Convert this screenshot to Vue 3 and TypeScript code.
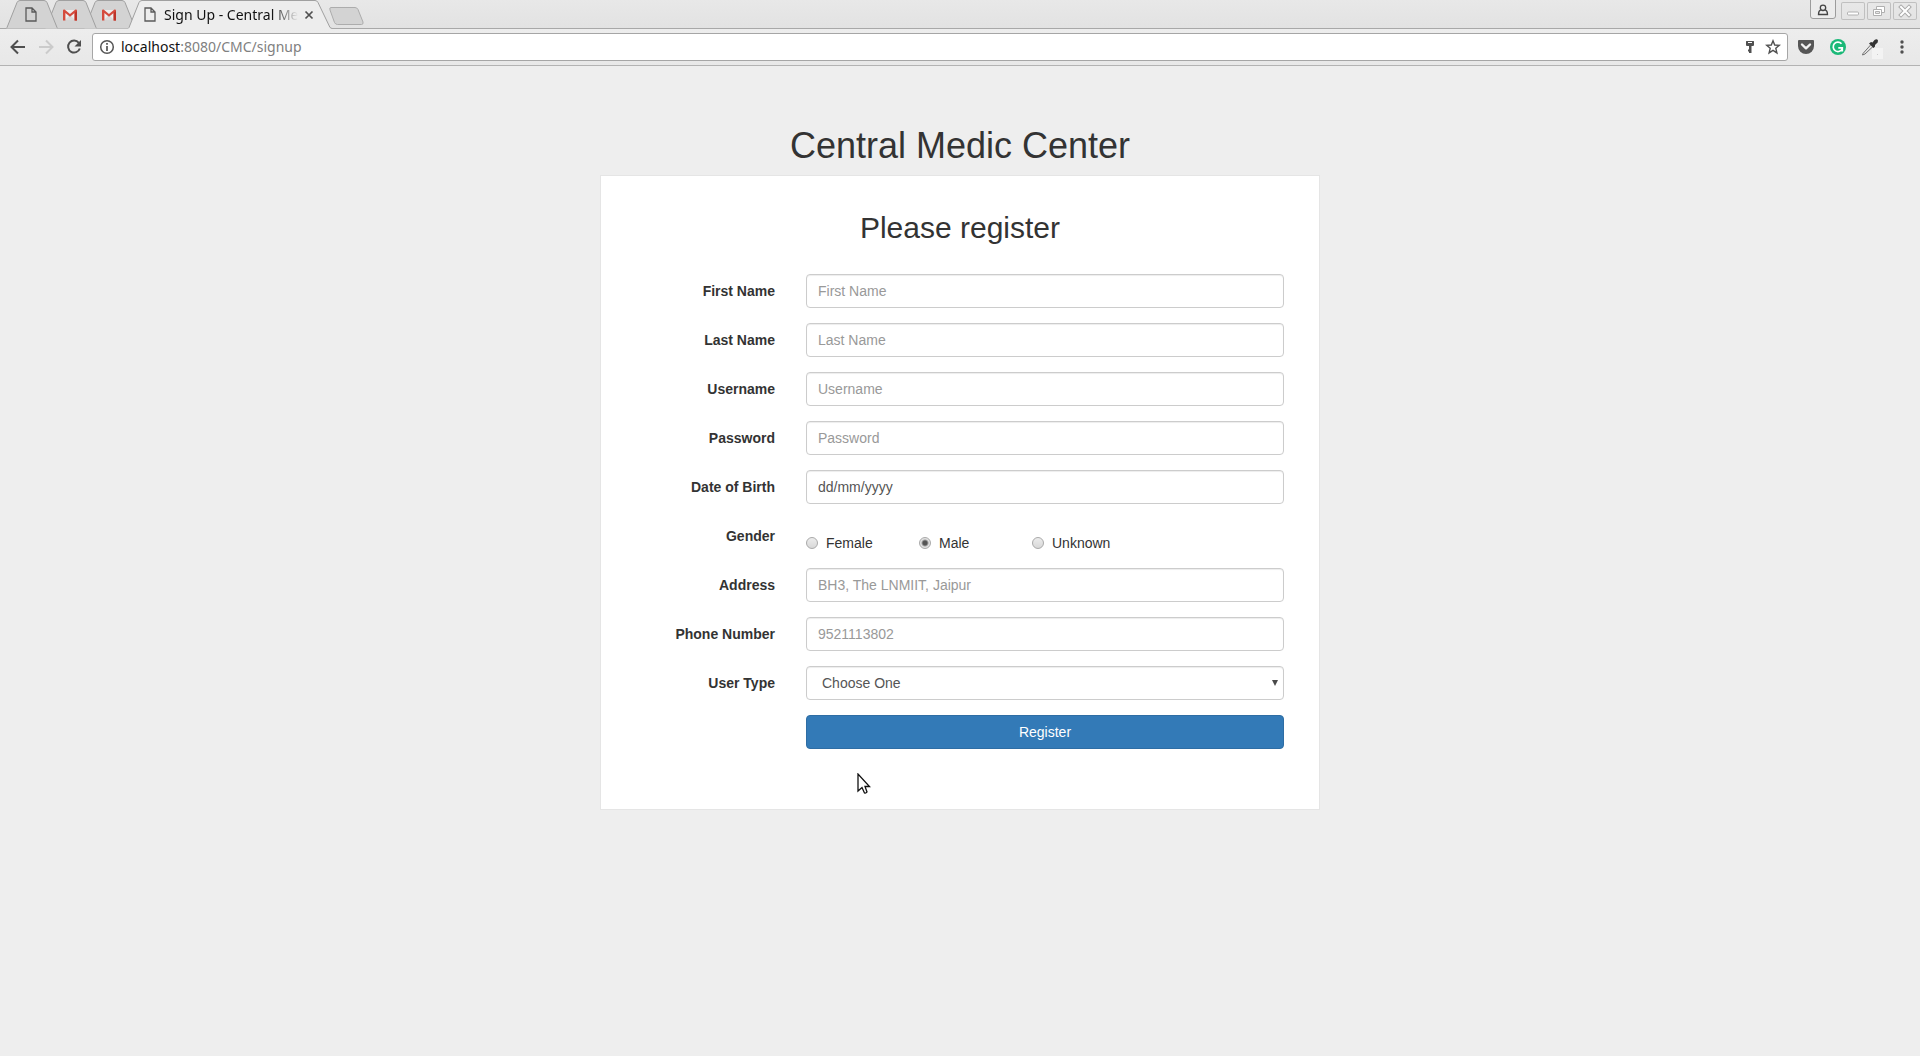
<script setup lang="ts">
import { ref } from 'vue'

interface Field {
  id: string
  label: string
  type: string
  placeholder: string
}

const accountFields: Field[] = [
  { id: 'firstName', label: 'First Name', type: 'text', placeholder: 'First Name' },
  { id: 'lastName', label: 'Last Name', type: 'text', placeholder: 'Last Name' },
  { id: 'username', label: 'Username', type: 'text', placeholder: 'Username' },
  { id: 'password', label: 'Password', type: 'password', placeholder: 'Password' },
  { id: 'dob', label: 'Date of Birth', type: 'text', placeholder: 'dd/mm/yyyy' },
]
const contactFields: Field[] = [
  { id: 'address', label: 'Address', type: 'text', placeholder: 'BH3, The LNMIIT, Jaipur' },
  { id: 'phone', label: 'Phone Number', type: 'tel', placeholder: '9521113802' },
]
const genders = ['Female', 'Male', 'Unknown']
const gender = ref('Male')
const backgroundTabs = ['page', 'mail', 'mail']
</script>

<template>
  <div class="window">
    <header class="browser">
      <div class="strip">
        <button v-for="(kind, i) in backgroundTabs" :key="i" type="button" class="tab" :class="'tab-' + i" aria-label="Background tab">
          <svg class="shape" width="52" height="29" viewBox="0 0 52 29">
            <path d="M0 28.5 L1 27.5 L11 2.5 Q12 .5 14 .5 H38 Q40 .5 41 2.5 L51 27.5 L52 28.5" fill="#d3d3d3" stroke="#a0a0a0" />
          </svg>
          <svg v-if="kind === 'page'" class="glyph" width="12" height="15" viewBox="0 0 12 15">
            <path d="M1 1 H7 L11 5 V14 H1 Z M7 1 V5 H11" fill="none" stroke="#5a5a5a" stroke-width="1.3" />
          </svg>
          <svg v-else class="glyph" width="14" height="12" viewBox="0 0 14 12">
            <path d="M1 1 H13 V11 H1 Z" fill="#eeeeee" />
            <path d="M2 11 L7 6 L12 11 Z" fill="#dadada" />
            <path d="M0 1.5 Q0 .5 1 .5 H1.6 L7 5 L12.4 .5 H13 Q14 .5 14 1.5 V11.5 H11.6 V4 L7 7.8 L2.4 4 V11.5 H0 Z" fill="#d54b3d" />
            <path d="M11.6 4 L14 2 V11.5 H11.6 Z" fill="#bd3429" />
          </svg>
        </button>
        <div class="tab active">
          <svg class="shape" width="204" height="29" viewBox="0 0 204 29">
            <path d="M0 29 V28.5 L1 27.5 L11 2.5 Q12 .5 14 .5 H187 Q189 .5 190 2.5 L202 27.5 L204 28.5 V29" fill="#ededed" />
            <path d="M0 28.5 L1 27.5 L11 2.5 Q12 .5 14 .5 H187 Q189 .5 190 2.5 L202 27.5 L204 28.5" fill="none" stroke="#a0a0a0" />
          </svg>
          <svg class="glyph" width="12" height="15" viewBox="0 0 12 15">
            <path d="M1 1 H7 L11 5 V14 H1 Z M7 1 V5 H11" fill="none" stroke="#5a5a5a" stroke-width="1.3" />
          </svg>
          <span class="title">Sign Up - Central Me</span>
          <button type="button" class="plain" aria-label="Close tab">
            <svg width="10" height="10" viewBox="0 0 10 10"><path d="M1.5 1.5 L8.5 8.5 M8.5 1.5 L1.5 8.5" stroke="#505050" stroke-width="1.7" /></svg>
          </button>
        </div>
        <button type="button" class="plain new-tab" aria-label="New tab">
          <svg width="36" height="18" viewBox="0 0 36 18"><path d="M2 .5 H26 Q28 .5 29 2.5 L34 15 Q34.500 17.500 32.500 17.500 H8.500 Q6.500 17.500 5.500 15.500 L1 3 Q.2 .5 2 .5 Z" fill="#d3d3d3" stroke="#acacac" /></svg>
        </button>
        <div class="controls">
          <button type="button" class="plain avatar" aria-label="Profile">
            <svg width="26" height="19" viewBox="0 0 26 19">
              <path d="M.5 0 V16 Q.5 18.500 3 18.500 H23 Q25.500 18.500 25.500 16 V0" fill="#ececec" stroke="#9c9c9c" />
              <path d="M10.800 9.800 Q8.500 10.600 8.500 14.500 H17.500 Q17.500 10.600 15.200 9.800" fill="none" stroke="#454545" stroke-width="1.300" />
              <circle cx="13" cy="7.800" r="2.700" fill="#ececec" stroke="#454545" stroke-width="1.300" />
            </svg>
          </button>
          <button type="button" class="plain control" aria-label="Minimize">
            <svg width="24" height="18" viewBox="0 0 24 18"><rect x="6.500" y="10" width="11" height="3" rx="1" fill="#fff" stroke="#b0b0b0" /></svg>
          </button>
          <button type="button" class="plain control" aria-label="Restore">
            <svg width="24" height="18" viewBox="0 0 24 18">
              <path d="M9.500 4.500 H17.500 V10.500 H9.500 Z" fill="#fff" stroke="#b0b0b0" />
              <path d="M6.500 7.500 H14.500 V13.500 H6.500 Z" fill="#fff" stroke="#b0b0b0" />
              <path d="M8.500 9.500 H12.500 V11.500 H8.500 Z" fill="#e8e8e8" stroke="#b0b0b0" />
            </svg>
          </button>
          <button type="button" class="plain control" aria-label="Close">
            <svg width="24" height="18" viewBox="0 0 24 18">
              <path d="M8 5 L16 13 M16 5 L8 13" stroke="#aaaaaa" stroke-width="4" stroke-linecap="square" />
              <path d="M8 5 L16 13 M16 5 L8 13" stroke="#fff" stroke-width="2" stroke-linecap="square" />
            </svg>
          </button>
        </div>
      </div>

      <div class="toolbar">
        <button type="button" class="plain nav" aria-label="Back">
          <svg width="16" height="16" viewBox="0 0 16 16"><path d="M15 8 H2 M8 1.500 L1.500 8 L8 14.500" fill="none" stroke="#4f4f4f" stroke-width="2" /></svg>
        </button>
        <button type="button" class="plain nav" aria-label="Forward">
          <svg width="16" height="16" viewBox="0 0 16 16"><path d="M1 8 H14 M8 1.500 L14.500 8 L8 14.500" fill="none" stroke="#cbcbcb" stroke-width="2" /></svg>
        </button>
        <button type="button" class="plain nav" aria-label="Reload">
          <svg width="16" height="16" viewBox="0 0 16 16"><path d="M12.800 3.800 A6 6 0 1 0 13.800 9.500" fill="none" stroke="#4f4f4f" stroke-width="2" /><path d="M15 1 V7.500 H8.500 Z" fill="#4f4f4f" /></svg>
        </button>
        <div class="omnibox">
          <svg width="16" height="16" viewBox="0 0 16 16"><circle cx="8" cy="8" r="6.300" fill="none" stroke="#555" stroke-width="1.500" /><path d="M8 4 V5.700 M8 7 V12" stroke="#555" stroke-width="1.700" /></svg>
          <span class="address"><span class="host">localhost</span>:8080/CMC/signup</span>
          <svg width="10" height="14" viewBox="0 0 10 14"><path d="M1.500 1 H8.500 Q9 1 9 1.500 V5 Q9 6 8 6 H6.500 V13 H4 V11.500 H3 V9.500 H4 V6 H2 Q1 6 1 5 V1.500 Q1 1 1.500 1 Z M3 2 V3 H7 V2 Z" fill="#505050" fill-rule="evenodd" /></svg>
          <svg width="16" height="16" viewBox="0 0 16 16"><path d="M8 1.800 L9.700 6 L14.300 6.300 L10.800 9.300 L11.900 13.900 L8 11.400 L4.100 13.900 L5.200 9.300 L1.700 6.300 L6.300 6 Z" fill="none" stroke="#505050" stroke-width="1.400" /></svg>
        </div>
        <div class="extensions">
          <button type="button" class="plain" aria-label="Pocket">
            <svg width="18" height="16" viewBox="0 0 18 16"><path d="M2 1 H16 Q17 1 17 2 V7 A8 8 0 0 1 1 7 V2 Q1 1 2 1 Z" fill="#565656" /><path d="M5 5.500 L9 9.300 L13 5.500" fill="none" stroke="#f2f2f2" stroke-width="2.400" stroke-linecap="round" stroke-linejoin="round" /></svg>
          </button>
          <button type="button" class="plain" aria-label="Grammar check">
            <svg width="16" height="16" viewBox="0 0 16 16"><circle cx="8" cy="8" r="8" fill="#1bb978" /><path d="M11.500 4.800 A4.700 4.700 0 1 0 12.300 9.500 M8.300 8.800 H12.300 V12.500" fill="none" stroke="#fff" stroke-width="1.700" /></svg>
          </button>
          <button type="button" class="plain" aria-label="Color picker">
            <svg width="22" height="24" viewBox="0 0 22 24"><rect x="11" y="13" width="11" height="11" fill="#f3f3f3" /><path d="M2 18.500 L10 9.500 L12 11.500 L4 19 L1.500 20 Z" fill="#e3e3e3" stroke="#707070" /><path d="M8 8.500 L10 7 L11.500 7.500 L13.500 5 Q16 3.500 17 5.500 Q17.300 7.500 15 9 L14 10 L14 11.500 L12.500 13 Z" fill="#333" /><rect x="16" y="19" width="1" height="1" fill="#ccc" /></svg>
          </button>
          <button type="button" class="plain menu" aria-label="Menu">
            <svg width="4" height="14" viewBox="0 0 4 14"><circle cx="2" cy="2" r="1.700" fill="#505050" /><circle cx="2" cy="7" r="1.700" fill="#505050" /><circle cx="2" cy="12" r="1.700" fill="#505050" /></svg>
          </button>
        </div>
      </div>
    </header>

    <main class="page">
      <h1>Central Medic Center</h1>
      <form class="panel" @submit.prevent>
        <h2>Please register</h2>
        <div v-for="field in accountFields" :key="field.id" class="row">
          <label class="caption" :for="field.id">{{ field.label }}</label>
          <input :id="field.id" class="box" :class="{ date: field.id === 'dob' }" :type="field.type" :placeholder="field.placeholder" />
        </div>
        <div class="row" role="radiogroup" aria-labelledby="gender">
          <span id="gender" class="caption">Gender</span>
          <div class="choices">
            <label v-for="option in genders" :key="option" class="choice">
              <input v-model="gender" type="radio" name="gender" :value="option" />{{ option }}
            </label>
          </div>
        </div>
        <div v-for="field in contactFields" :key="field.id" class="row">
          <label class="caption" :for="field.id">{{ field.label }}</label>
          <input :id="field.id" class="box" :type="field.type" :placeholder="field.placeholder" />
        </div>
        <div class="row">
          <label class="caption" for="userType">User Type</label>
          <div class="picker">
            <select id="userType" class="box"><option>Choose One</option></select>
            <svg width="6" height="6" viewBox="0 0 6 6"><path d="M0 0 H6 L3 6 Z" fill="#4a4a4a" /></svg>
          </div>
        </div>
        <div class="row">
          <button type="submit" class="submit">Register</button>
        </div>
        <svg class="pointer" width="14" height="22" viewBox="0 0 14 22">
          <path d="M1 1 V18 L5 14.500 L7.500 20 Q9 20.500 10 19 L8 13.500 H12.500 Z" fill="#fff" stroke="#111" stroke-width="1.300" />
        </svg>
      </form>
    </main>
  </div>
</template>

<style>
body {
  margin: 0;
  background: #eeeeee;
}
</style>

<style scoped>
* {
  box-sizing: border-box;
}
.window {
  font: 14px/20px "Liberation Sans", Arial, sans-serif;
  color: #333333;
}
svg {
  display: block;
  flex: none;
}
.plain {
  display: flex;
  padding: 0;
  border: 0;
  background: none;
}
.browser {
  font-family: "Noto Sans", "Open Sans", sans-serif;
}
.strip {
  display: flex;
  height: 29px;
  padding-left: 6px;
  background: linear-gradient(#e8e8e8, #e2e2e2);
  box-shadow: inset 0 -1px #a8a8a8;
}
.tab {
  position: relative;
  display: flex;
  align-items: center;
  justify-content: center;
  width: 52px;
  height: 29px;
  padding: 0 2px 0 0;
  border: 0;
  background: none;
}
.tab + .tab {
  margin-left: -13px;
}
.tab-0 {
  z-index: 3;
}
.tab-1 {
  z-index: 2;
}
.tab-2 {
  z-index: 1;
}
.shape {
  position: absolute;
  top: 0;
  left: 0;
}
.glyph {
  position: relative;
}
.tab.active {
  z-index: 4;
  width: 204px;
  margin-left: -8px;
  padding-left: 16px;
  justify-content: flex-start;
  color: #111111;
}
.title {
  position: relative;
  width: 134px;
  margin: 0 6px 0 8px;
  white-space: nowrap;
  mask-image: linear-gradient(to right, #000 108px, transparent 134px);
}
.active .plain {
  position: relative;
}
.new-tab {
  margin: 7px 0 0 -3px;
}
.controls {
  display: flex;
  gap: 2px;
  margin-left: auto;
  padding-right: 3px;
}
.avatar {
  height: 19px;
  margin-right: 3px;
}
.control {
  height: 18px;
  margin-top: 2px;
  border-radius: 2px;
  box-shadow: inset 0 0 0 1px #c0c0c0;
}
.toolbar {
  display: flex;
  align-items: center;
  height: 37px;
  padding: 0 16px 0 10px;
  border-bottom: 1px solid #b3b3b3;
  background: linear-gradient(#ededed, #e8e8e8);
}
.nav {
  margin-right: 12px;
}
.nav + .nav + .nav {
  margin-right: 10px;
}
.omnibox {
  display: flex;
  flex: 1;
  align-items: center;
  gap: 10px;
  height: 28px;
  padding: 0 6px;
  border: 1px solid #a6a6a6;
  border-radius: 3px;
  background: #ffffff;
}
.address {
  flex: 1;
  margin-left: -4px;
  color: #808080;
}
.host {
  color: #111111;
}
.extensions {
  display: flex;
  align-items: center;
  gap: 15px;
  margin-left: 9px;
}
.menu {
  margin-left: 2px;
}
.page {
  padding: 60px 16px 16px;
}
h1,
h2 {
  margin: 0;
  font-weight: 500;
  text-align: center;
}
h1 {
  margin-bottom: 9px;
  font-size: 36px;
  line-height: 40px;
}
h2 {
  margin-bottom: 30px;
  font-size: 30px;
  line-height: 33px;
}
.panel {
  position: relative;
  max-width: 720px;
  margin: 0 auto;
  padding: 35px 35px 60px;
  border: 1px solid #e5e5e5;
  background: #ffffff;
}
.row {
  display: grid;
  grid-template-columns: 139px 1fr;
  column-gap: 31px;
  height: 34px;
}
.row + .row {
  margin-top: 15px;
}
.caption {
  padding-top: 7px;
  font-weight: 700;
  text-align: right;
}
.box {
  width: 100%;
  height: 34px;
  padding: 6px 11px;
  border: 1px solid #cccccc;
  border-radius: 4px;
  background: #ffffff;
  box-shadow: inset 0 1px 1px rgba(0, 0, 0, 0.075);
  color: #555555;
  font: inherit;
  appearance: none;
}
.box::placeholder {
  color: #999999;
  opacity: 1;
}
.date::placeholder {
  color: #555555;
}
.choices {
  display: grid;
  grid-template-columns: repeat(3, 113px);
  padding-top: 14px;
}
.choice {
  display: flex;
  align-items: center;
  gap: 8px;
  height: 20px;
}
.choice input {
  width: 12px;
  height: 12px;
  margin: 0;
  border: 1px solid #a9a9a9;
  border-radius: 50%;
  background: linear-gradient(#ececec, #d8d8d8);
  appearance: none;
}
.choice input:checked {
  background: radial-gradient(circle, #555555 0 2px, #e2e2e2 4px);
}
.picker {
  display: grid;
  align-items: center;
}
.picker > * {
  grid-area: 1 / 1;
}
.picker .box {
  padding-left: 15px;
}
.picker svg {
  justify-self: end;
  margin-right: 6px;
}
.submit {
  grid-column: 2;
  border: 1px solid #2e6da4;
  border-radius: 4px;
  background: #337ab7;
  color: #ffffff;
  font: inherit;
}
.pointer {
  position: absolute;
  bottom: 14px;
  left: 256px;
}
</style>
